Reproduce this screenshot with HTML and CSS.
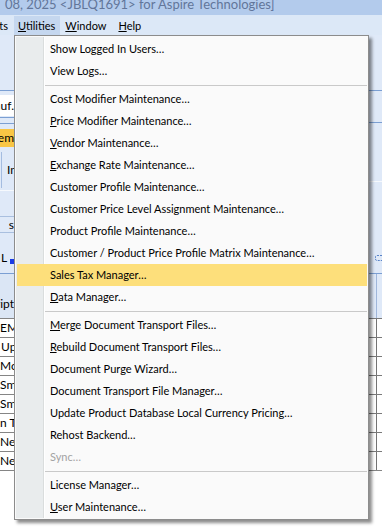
FILE: index.html
```html
<!DOCTYPE html>
<html lang="en">
<head>
    <meta charset="UTF-8">
    <meta name="viewport" content="width=device-width, initial-scale=1.0">
    <title>Utilities menu</title>
    <link rel="stylesheet" href="styles.css">
</head>
<body>
<div class="window">
    <div class="titlebar"><span>08, 2025 &lt;JBLQ1691&gt; for Aspire Technologies]</span></div>

    <div class="menubar">
        <div class="clip-end menubar-clip"><span class="menubar-item">Reports</span></div>
        <span class="menubar-item open"><u>U</u>tilities</span>
        <span class="menubar-item window-item"><u>W</u>indow</span>
        <span class="menubar-item"><u>H</u>elp</span>
    </div>

    <div class="workspace">
        <!-- left edge of the form, mostly hidden by the open menu -->
        <div class="side side-left">
            <div class="band band-top"></div>
            <div class="band field-row">
                <div class="field clip-end"><span>Manuf.</span></div>
            </div>
            <div class="band gap-row"></div>
            <div class="band orange-row">
                <div class="field field-orange clip-end"><span>Placem</span></div>
            </div>
            <div class="band tab-row"><div class="tab">Info</div></div>
            <div class="band plain-row"></div>
            <div class="band s-row">s</div>
            <div class="band l-row"><span>L</span><span class="marker"></span></div>
            <div class="band grid-head clip-end"><span>Descript</span></div>
            <div class="grid-rows">
                <div class="grid-row">EM</div>
                <div class="grid-row indent">Upgrade</div>
                <div class="grid-row">Mount</div>
                <div class="grid-row">Small</div>
                <div class="grid-row">Small</div>
                <div class="grid-row">n Tray</div>
                <div class="grid-row">New</div>
                <div class="grid-row">New</div>
            </div>
        </div>

        <div class="center">
            <div class="center-top"></div>
        </div>

        <!-- right edge of the form -->
        <div class="side side-right">
            <div class="band band-top"></div>
            <div class="band r-row1"></div>
            <div class="band r-row2"></div>
            <div class="band r-row3">
                <svg class="dash-icon" width="8" height="8" viewBox="0 0 8 8">
                    <path d="M8 1.5 H3 Q1.5 1.5 1.5 3 V5 Q1.5 6.5 3 6.5 H8" fill="none" stroke="#5a84c8" stroke-width="1" stroke-dasharray="2 1"/>
                </svg>
            </div>
            <div class="band r-head"><div class="cell-a"></div><div class="cell-b"></div></div>
            <div class="grid-rows">
                <div class="r-grid-row"><div class="cell-a"></div><div class="cell-b"></div></div>
                <div class="r-grid-row"><div class="cell-a"></div><div class="cell-b"></div></div>
                <div class="r-grid-row"><div class="cell-a"></div><div class="cell-b"></div></div>
                <div class="r-grid-row"><div class="cell-a"></div><div class="cell-b"></div></div>
                <div class="r-grid-row"><div class="cell-a"></div><div class="cell-b"></div></div>
                <div class="r-grid-row"><div class="cell-a"></div><div class="cell-b"></div></div>
                <div class="r-grid-row"><div class="cell-a"></div><div class="cell-b"></div></div>
                <div class="r-grid-row"><div class="cell-a"></div><div class="cell-b"></div></div>
            </div>
        </div>
    </div>

    <!-- the open Utilities drop-down -->
    <div class="dropdown">
        <div class="dropdown-list">
            <div class="menu-item">Show Logged In Users…</div>
            <div class="menu-item">View Logs…</div>
            <div class="menu-sep"></div>
            <div class="menu-item">Cost Modifier Maintenance…</div>
            <div class="menu-item"><u>P</u>rice Modifier Maintenance…</div>
            <div class="menu-item"><u>V</u>endor Maintenance…</div>
            <div class="menu-item"><u>E</u>xchange Rate Maintenance…</div>
            <div class="menu-item">Customer Profile Maintenance…</div>
            <div class="menu-item">Customer Price Level Assignment Maintenance…</div>
            <div class="menu-item">Product Profile Maintenance…</div>
            <div class="menu-item">Customer / Product Price Profile Matrix Maintenance…</div>
            <div class="menu-item active">Sales Tax Manager…</div>
            <div class="menu-item"><u>D</u>ata Manager…</div>
            <div class="menu-sep"></div>
            <div class="menu-item"><u>M</u>erge Document Transport Files…</div>
            <div class="menu-item"><u>R</u>ebuild Document Transport Files…</div>
            <div class="menu-item">Document Purge Wizard…</div>
            <div class="menu-item">Document Transport File Manager…</div>
            <div class="menu-item">Update Product Database Local Currency Pricing…</div>
            <div class="menu-item">Rehost Backend…</div>
            <div class="menu-item disabled">Sync…</div>
            <div class="menu-sep"></div>
            <div class="menu-item">License Manager…</div>
            <div class="menu-item"><u>U</u>ser Maintenance…</div>
        </div>
    </div>
</div>
</body>
</html>
```

FILE: styles.css
```css
* {
    box-sizing: border-box;
}
body {
    margin: 0;
    width: 382px;
    height: 529px;
    overflow: hidden;
    background: #ffffff;
    font-family: Lato, "Liberation Sans", sans-serif;
    font-size: 11px;
    color: #000000;
}
.window {
    position: relative;
    height: 529px;
}
.clip-end {
    display: flex;
    justify-content: flex-end;
    overflow: hidden;
    white-space: nowrap;
}

/* title + menu bar */
.titlebar {
    height: 15px;
    background: #b3cbec;
    color: #62769a;
    font-size: 13px;
    line-height: 15px;
    padding-left: 5px;
    overflow: hidden;
    white-space: nowrap;
}
.titlebar span {
    display: block;
    margin-top: -3px;
}
.menubar {
    height: 20px;
    background: #dce8f7;
    display: flex;
}
.menubar-clip {
    width: 14px;
}
.menubar-item {
    padding: 2px 6px 0;
    line-height: 18px;
    white-space: nowrap;
}
.menubar-item.open {
    background: #c5d7ef;
    margin-top: 1px;
    padding: 1px 5px 0 4px;
}
.menubar-item.window-item {
    padding: 2px 6px 0 5px;
}

/* background form */
.workspace {
    display: flex;
    height: 494px;
}
.side {
    display: flex;
    flex-direction: column;
    overflow: hidden;
    white-space: nowrap;
}
.side-left {
    width: 14px;
    font-size: 12px;
}
.side-right {
    width: 13px;
}
.center {
    flex: 1;
}
.center-top {
    height: 435px;
    background: #dfe9f8;
}
.band {
    background: #dfe9f8;
    flex-shrink: 0;
}
.band-top {
    height: 55px;
}
.field-row {
    height: 27px;
    border-top: 1px solid #7b9fd3;
    padding-top: 4px;
}
.field {
    height: 21px;
    background: #ffffff;
    line-height: 21px;
}
.gap-row {
    height: 7px;
    border-top: 1px solid #7b9fd3;
    border-bottom: 1px solid #7b9fd3;
}
.orange-row {
    height: 26px;
    padding-top: 5px;
}
.field-orange {
    height: 18px;
    line-height: 18px;
    background: #f9c645;
}
.tab-row {
    height: 40px;
    padding: 2px 0 2px 1px;
}
.tab {
    height: 36px;
    line-height: 36px;
    border-left: 1px solid #a4bce0;
    padding-left: 5px;
}
.plain-row {
    height: 26px;
    border-top: 1px solid #f6f9fd;
}
.s-row {
    height: 17px;
    border-top: 1px solid #a9bfdf;
    border-bottom: 1px solid #a9bfdf;
    line-height: 15px;
    text-align: right;
}
.l-row {
    height: 40px;
    display: flex;
    align-items: flex-end;
    padding: 0 0 9px 1px;
}
.l-row span {
    line-height: 12px;
}
.marker {
    width: 4px;
    height: 5px;
    background: #1a3be6;
    margin-left: 3px;
}
.grid-head {
    height: 45px;
    border-top: 1px solid #7b9fd3;
    align-items: flex-end;
    padding-bottom: 7px;
    background: #dbe6f5;
}
.grid-rows {
    background: #ffffff;
    border-bottom: 1px solid #858585;
}
.grid-row {
    height: 19px;
    border-top: 1px solid #858585;
    line-height: 18px;
}
.grid-row.indent {
    padding-left: 1px;
}

/* right edge */
.r-row1 {
    height: 32px;
    border-top: 1px solid #7b9fd3;
}
.r-row2 {
    height: 59px;
    border-top: 1px solid #7b9fd3;
}
.r-row3 {
    height: 92px;
    border-top: 1px solid #f6f9fd;
    padding: 72px 0 0 5px;
}
.dash-icon {
    display: block;
}
.r-head {
    height: 45px;
    border-top: 1px solid #7b9fd3;
    display: flex;
}
.r-grid-row {
    height: 19px;
    border-top: 1px solid #7a7a7a;
    display: flex;
}
.cell-a {
    width: 7px;
}
.cell-b {
    flex: 1;
    border-left: 1px solid #737373;
}
.r-head .cell-b {
    border-left-color: #9fb6da;
}

/* drop-down menu */
.dropdown {
    position: absolute;
    left: 14px;
    top: 35px;
    width: 355px;
    border: 1px solid #8c8c8c;
    background: #fafafa;
    padding: 1px;
    box-shadow: 3px 3px 3px rgba(0, 0, 0, 0.45);
}
.dropdown-list {
    padding-top: 1px;
    background: linear-gradient(to right, #e9eced 0 27px, #dadddd 27px 28px, #ffffff 28px 29px, transparent 29px);
}
.menu-item {
    height: 22px;
    line-height: 22px;
    margin-left: 1px;
    padding-left: 33px;
    white-space: nowrap;
}
.menu-item.active {
    background: #fddf7b;
}
.menu-item.disabled {
    color: #a3a3a3;
}
.menu-sep {
    margin: 3px 0 2px 29px;
    border-top: 1px solid #c9c9c9;
}
```
